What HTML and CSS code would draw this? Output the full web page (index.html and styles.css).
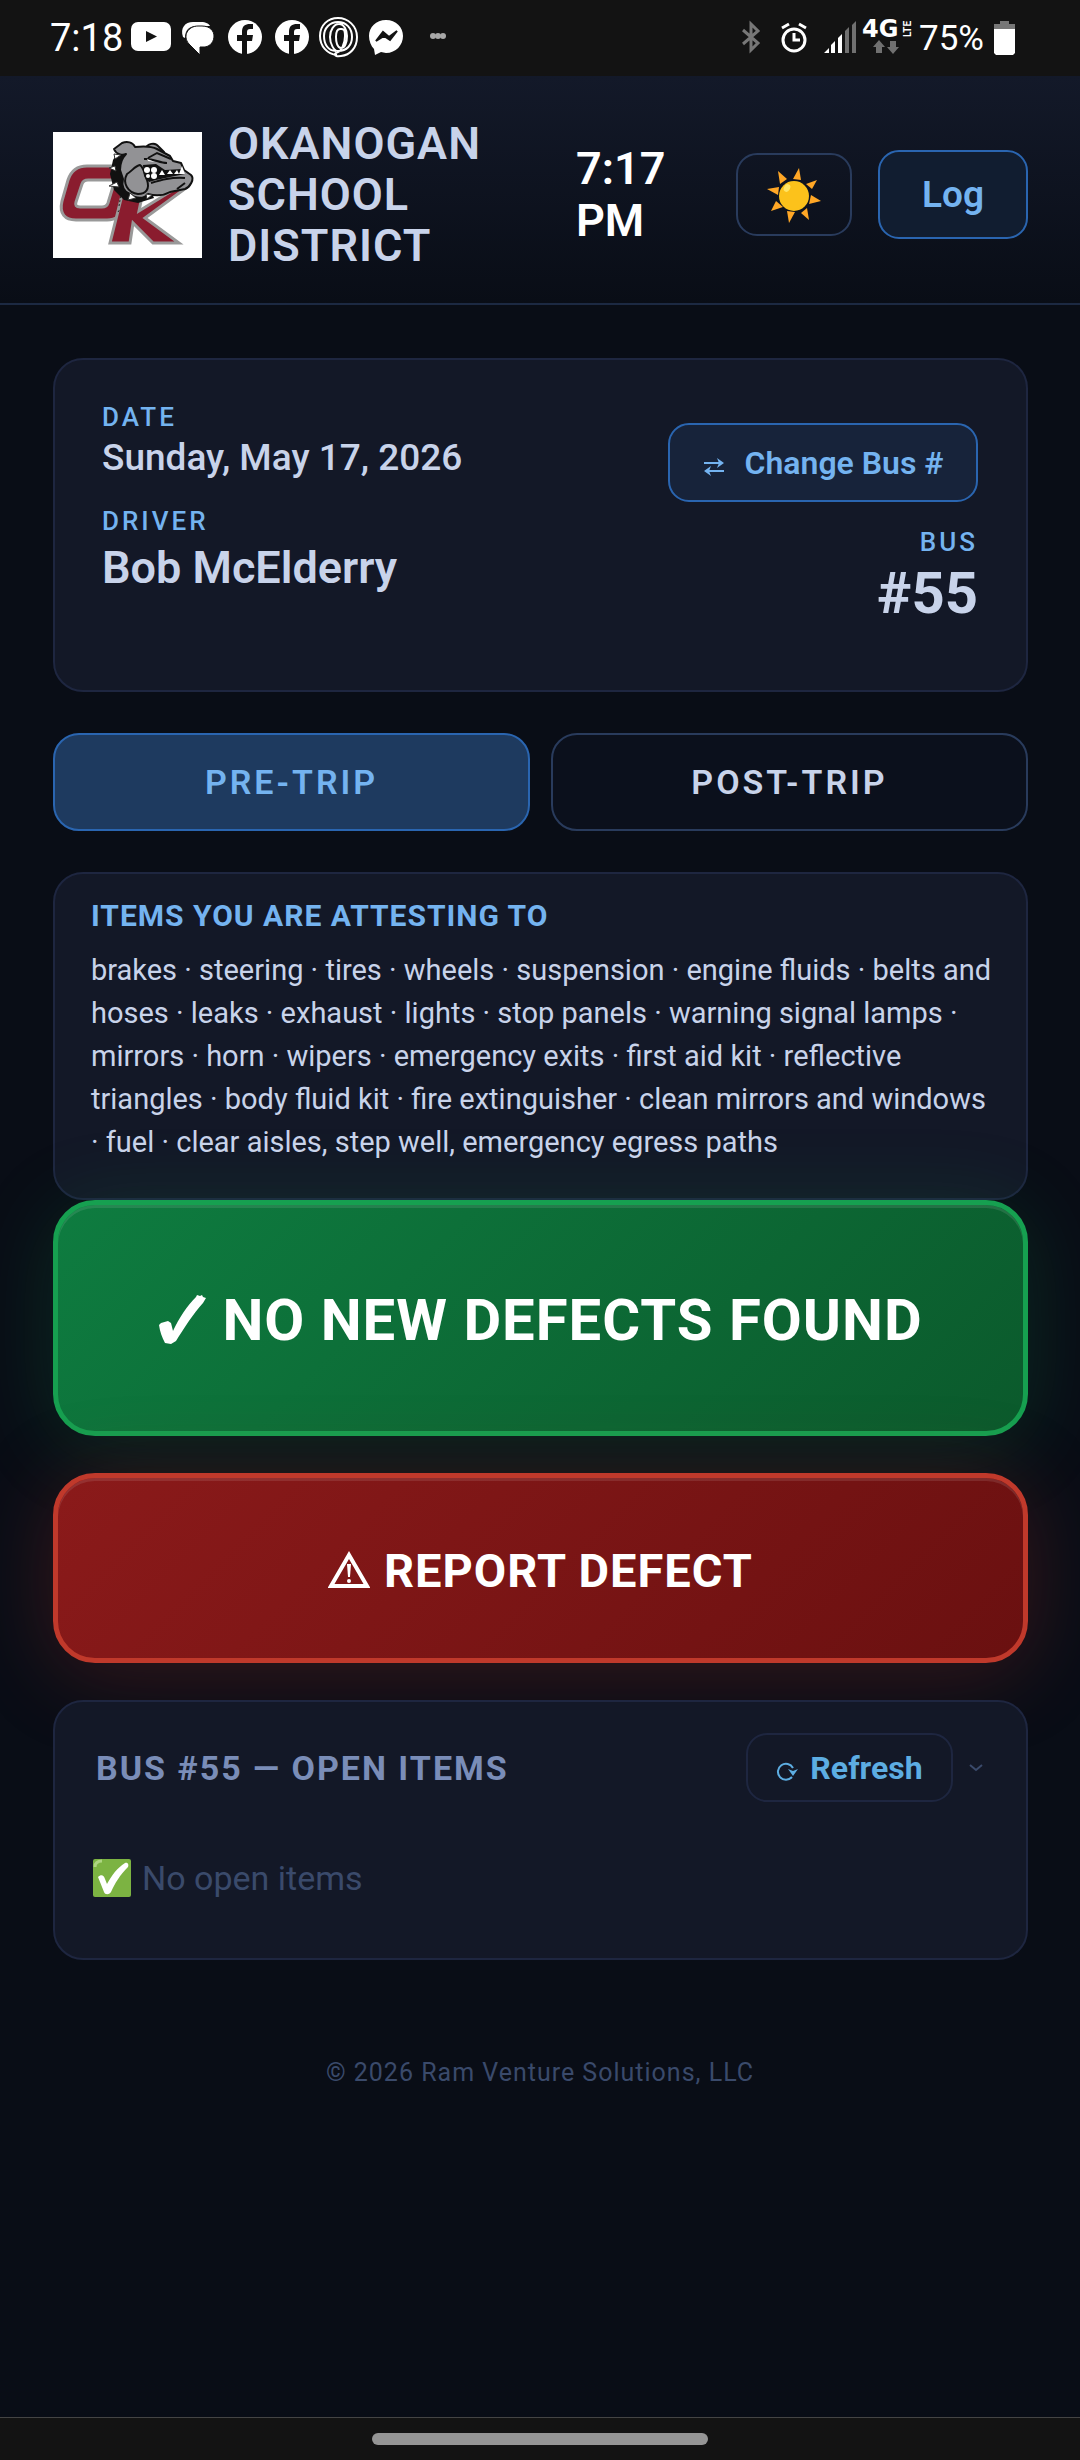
FILE: index.html
```html
<!DOCTYPE html>
<html lang="en">
  <head>
    <meta charset="UTF-8" />
    <meta name="viewport" content="width=device-width, initial-scale=1.0" />
    <title>Okanogan School District - Bus Inspection</title>
    <link rel="stylesheet" href="styles.css">
  </head>
  <body>
    <div class="status-bar">
      <div class="status-left">
        <span class="status-time">7:18</span>
        <svg width="320" height="42" viewBox="0 0 320 42" fill="#fff">
          <!-- youtube -->
          <rect x="0" y="5" width="40" height="29" rx="7" />
          <path d="M15 14v11l11-5.500z" fill="#131313" />
          <!-- chat -->
          <path d="M52 20c-3-9 2-15 10-15h8c5 0 8 2 9 4H66c-8 0-12 4-12 12z" />
          <path d="M67 9h4c8 0 12 5 12 10s-3 10-9 11h-5v8L58 27c-7-8-1-18 9-18z" stroke="#131313" stroke-width="1" />
          <!-- facebook -->
          <g id="fb">
            <circle cx="114" cy="20" r="17" />
            <path d="M111 37V24h-5v-6h5v-3c0-6 3-8 8-8h3v5h-3c-2 0-3 1-3 3v3h6l-1 6h-5v13z" fill="#131313" />
          </g>
          <use href="#fb" x="47" />
          <!-- rings -->
          <g fill="none" stroke="#fff" stroke-width="2">
            <path d="M206 38c-10-1-17-9-17-19 0-11 8-18 18-18s19 8 19 19-7 18-16 19-6-3-3-4 7-8 7-16-2-7-5-7-4 4-4 8 1 11 5 11 6-6 6-12-3-12-8-12-9 6-9 13 4 14 8 14c9 0 14-6 14-14 0-9-6-15-14-15s-14 6-14 14 4 15 12 15" />
          </g>
          <!-- messenger -->
          <path d="M255 3c10 0 17 7 17 16s-7 17-17 17l-5-1-6 3-1-6c-3-3-5-8-5-13 0-9 7-16 17-16z" />
          <path d="M245 24l7-9 6 5 8-6-7 9-6-4z" fill="#131313" stroke="#131313" stroke-width="2" />
          <g fill="#a8a8a8">
            <circle cx="302" cy="19" r="3" />
            <circle cx="307" cy="19" r="3" />
            <circle cx="312" cy="19" r="3" />
          </g>
        </svg>
      </div>
      <div class="status-right">
        <svg class="status-icons" width="172" height="40" viewBox="0 0 172 40">
          <!-- bluetooth -->
          <path d="M2 12l15 13-7 7V6l7 7L2 26" fill="none" stroke="#777" stroke-width="3" />
          <!-- alarm -->
          <g fill="none" stroke="#fff" stroke-width="3">
            <circle cx="53" cy="22" r="11" />
            <path d="M53 15v7h6M41 10l7-4M65 10l-7-4" />
          </g>
          <!-- signal -->
          <path d="M83 35l5-5v5zM90 35v-8l4-4v12zM97 35V20l4-4v19z" fill="#fff" />
          <path d="M104 35V13l4-4v26zM111 35V7l4-4v32z" fill="#707070" />
          <path d="M138 22l6 7h-3v6h-6v-6h-3zM152 36l6-7h-3v-6h-6v6h-3z" fill="#707070" />
          <text x="121" y="19" class="net-label">4G</text>
          <text x="-19" y="170" transform="rotate(-90)" class="lte-label">LTE</text>
        </svg>
        <span class="battery-text">75%</span>
        <svg width="22" height="34" viewBox="0 0 22 34">
          <path d="M6 0h9v3h6v6H0V3h6z" fill="#777" />
          <path d="M0 8h21v24l-2 2H2l-2-2z" fill="#fff" />
        </svg>
      </div>
    </div>

    <header class="header">
      <svg class="logo" viewBox="0 0 149 126" role="img" aria-label="Okanogan Bulldogs">
        <rect width="149" height="126" fill="#fff" />
        <g stroke="#999" stroke-width="3" fill="#8a1c2e">
          <path d="M59 34H34c-10 0-16 5-19 14L9 69c-3 13 3 19 14 19h31c9 0 15-5 18-14l9-30V34zM35 48h27l-7 23c-1 3-3 4-6 4H27c-4 0-5-2-4-5l6-18c1-3 3-4 6-4z" fill-rule="evenodd" />
          <path d="M71 55h20l-5 24 39-24 8 1-41 30 34 25h-26L80 91l-3 20H57z" />
        </g>
        <path d="M66 74l3-18M65 80l2-3" stroke="#222" stroke-width="1" stroke-dasharray="2 2" />
        <path d="M65 20l-5 8-3 14 4 16 10 10 14 3 16-5-20-44z" fill="#111" />
        <g fill="#929295" stroke="#111" stroke-width="2" stroke-linejoin="round">
          <path d="M92 17c2-5 10-8 14-2l5 5-14 2z" />
          <path d="M61 17l8-6c5-2 11-1 13 4 9-1 16-1 22 2l13 7 3 5 8 2 3 7 7 5c4 4-1 12-6 14l-15 3c-7 4-15 4-22 2-4 5-12 5-18 0-6-2-9-8-7-15l-3-9c0-7 2-12 6-16-4 2-10 0-12-5z" />
          <path d="M74 42c5-3 8-8 13-9 5 4 4 10 7 15 3 9-1 14-9 14-10-1-16-11-11-20z" />
        </g>
        <path d="M90 33l13-1 9 6 17-1 3 5-15 3-14 3-7 2-5-6z" fill="#111" />
        <g fill="#fff">
          <circle cx="94" cy="38" r="3" /><circle cx="101" cy="38" r="3" />
          <circle cx="95" cy="44" r="2" /><circle cx="101" cy="44" r="3" />
          <path d="M106 43l3-5 3 5zM114 42l3-4 3 4zM121 42l3-4 2 4zM126 42l3-8 3 8z" />
        </g>
        <path d="M91 27c9-1 15 4 23 4M95 26l9-5 14 6M98 51c10-3 20-6 34-5M124 57l8-6" fill="none" stroke="#111" stroke-width="2" />
        <path d="M94 27l8 3-7-1z" fill="#fff" />
        <path d="M61 22l7 1-6 4zM56 36l6-2 1 5zM56 54l8-4 2 5zM75 68l2-7 6 5zM94 67l-1-5 6 1z" fill="#fff" stroke="#333" stroke-width="1" />
      </svg>
      <h1 class="district">Okanogan School District</h1>
      <time class="clock">7:17 PM</time>
      <button class="btn theme-btn" type="button" aria-label="Light mode">
        <svg width="56" height="56" viewBox="0 0 56 56">
          <g fill="#ffa726">
            <path d="M33 1l2 12-8-1z" />
            <path d="M51 13l-5 9-6-5z" />
            <path d="M55 34l-12 3 2-9z" />
            <path d="M43 53l-8-7 6-5z" />
            <path d="M23 56l-2-12 8 1z" />
            <path d="M5 44l5-10 7 6z" />
            <path d="M1 22l12-2-1 8z" />
            <path d="M12 4l9 8-7 5z" />
          </g>
          <circle cx="28" cy="29" r="15" fill="#fcc21b" />
          <ellipse cx="21" cy="21" rx="3" ry="4" transform="rotate(30 21 21)" fill="#ffe567" />
        </svg>
      </button>
      <button class="btn log-btn" type="button">Log</button>
    </header>

    <main class="main">
      <section class="card info-card">
        <dl class="info">
          <dt>Date</dt>
          <dd class="date">Sunday, May 17, 2026</dd>
          <dt>Driver</dt>
          <dd class="driver">Bob McElderry</dd>
        </dl>
        <div class="bus-side">
          <button class="btn change-btn" type="button">
            <svg width="22" height="28" viewBox="0 0 22 28">
              <path d="M1 14h17M21 22H4" stroke="currentColor" stroke-width="2" />
              <path d="M14 9l7 5-7 5 2-5zM8 17l-7 5 7 5-2-5z" fill="currentColor" />
            </svg>
            Change Bus #
          </button>
          <dl class="info info-bus">
            <dt>Bus</dt>
            <dd class="bus-number">#55</dd>
          </dl>
        </div>
      </section>

      <div class="tabs">
        <button class="tab active" type="button">Pre-Trip</button>
        <button class="tab" type="button">Post-Trip</button>
      </div>

      <section class="card attest">
        <h2>Items you are attesting to</h2>
        <p>brakes · steering · tires · wheels · suspension · engine fluids · belts and hoses · leaks · exhaust · lights · stop panels · warning signal lamps · mirrors · horn · wipers · emergency exits · first aid kit · reflective triangles · body fluid kit · fire extinguisher · clean mirrors and windows · fuel · clear aisles, step well, emergency egress paths</p>
      </section>

      <button class="action ok" type="button">
        <svg width="50" height="52" viewBox="0 0 50 52" fill="#fff">
          <path d="M1 31l2-2 7-2 3 2 2 8C21 24 29 12 38 3l1-2 3 1 2-1 1 2 3 1-3 5C35 20 26 34 18 47l-5 3-6-1c-3-6-5-11-6-18z" />
        </svg>
        No new defects found
      </button>
      <button class="action defect" type="button">
        <svg width="42" height="38" viewBox="0 0 42 38">
          <path d="M21 4L3 35h36z" fill="none" stroke="#fff" stroke-width="4" />
          <path d="M19 13h4l-1 13h-2z" fill="#fff" />
          <circle cx="21" cy="30" r="2" fill="#fff" />
        </svg>
        Report defect
      </button>

      <section class="card open-items">
        <div class="open-head">
          <h2>Bus #55 — Open items</h2>
          <button class="btn refresh-btn" type="button">
            <svg width="22" height="26" viewBox="0 0 22 26">
              <path d="M16 22a8 8 0 1 1 1-9" fill="none" stroke="currentColor" stroke-width="2" />
              <path d="M12 14l5 2 5-2-5 7z" fill="currentColor" />
            </svg>
            Refresh
          </button>
          <svg class="chevron" width="14" height="8" viewBox="0 0 14 8" fill="none" stroke="currentColor" stroke-width="2">
            <path d="M1 1l6 5 6-5" />
          </svg>
        </div>
        <p class="empty">
          <svg width="40" height="40" viewBox="0 0 40 40">
            <rect x="1" y="1" width="38" height="38" rx="2" fill="#7cb342" />
            <path d="M3 9c0-4 2-6 7-6" fill="none" stroke="#aed581" stroke-width="3" />
            <path d="M6 19c3-3 6-2 7 2l2 5C20 17 25 10 33 5c3-1 4 2 3 4-8 8-13 16-17 25-2 3-6 3-7 0z" fill="#fff" />
          </svg>
          No open items
        </p>
      </section>
    </main>

    <footer class="footer">© 2026 Ram Venture Solutions, LLC</footer>
    <div class="nav-bar"><span class="nav-pill"></span></div>
  </body>
</html>
```
FILE: styles.css
```css
* {
  box-sizing: border-box;
}
body {
  margin: 0;
  min-height: 100vh;
  display: flex;
  flex-direction: column;
  background: #090d16;
  color: #c8d3ea;
  font-family: Roboto, sans-serif;
}
h1, h2, p, dl, dd {
  margin: 0;
}
svg {
  flex-shrink: 0;
}
button {
  font-family: inherit;
  cursor: pointer;
}

/* phone status bar */
.status-bar {
  display: flex;
  justify-content: space-between;
  align-items: center;
  height: 76px;
  padding: 0 64px 0 50px;
  background: #131313;
  color: #fff;
}
.status-left,
.status-right {
  display: flex;
  align-items: center;
}
.status-left {
  gap: 8px;
}
.status-time {
  font-size: 38px;
}
.status-right {
  gap: 6px;
}
.status-icons {
  overflow: visible;
}
.battery-text {
  margin-right: 4px;
  font-size: 35px;
}
.net-label {
  fill: #fff;
  font-family: "DejaVu Sans", sans-serif;
  font-size: 24px;
  font-weight: 700;
}
.lte-label {
  fill: #fff;
  font-size: 10px;
  font-weight: 700;
}

.header {
  display: flex;
  align-items: center;
  gap: 26px;
  padding: 42px 52px 32px 53px;
  background: linear-gradient(#131929, #090d16);
  border-bottom: 2px solid #1c2942;
}
.logo {
  width: 149px;
  height: 126px;
}
.district {
  flex: 1;
  max-width: 290px;
  margin-right: auto;
  font-size: 45px;
  line-height: 51px;
  font-weight: 600;
  letter-spacing: 1px;
  text-transform: uppercase;
}
.clock {
  width: 134px;
  color: #fff;
  font-size: 45px;
  line-height: 52px;
  font-weight: 600;
}
.btn {
  display: flex;
  align-items: center;
  justify-content: center;
  border: 2px solid #2a65b0;
  border-radius: 21px;
  background: none;
  color: #74b3f0;
  font-weight: 600;
}
.theme-btn {
  width: 116px;
  height: 83px;
  padding: 0;
  border-color: #293b5c;
}
.log-btn {
  width: 150px;
  height: 89px;
  background: #111d30;
  font-size: 37px;
}

.main {
  padding: 53px 52px 0 53px;
}
.card {
  border: 2px solid #1e2640;
  border-radius: 30px;
  background: #131827;
}
.info-card {
  display: flex;
  justify-content: space-between;
  height: 334px;
  padding: 41px 48px 41px 47px;
}
.info dt {
  color: #74b3f0;
  font-size: 26px;
  line-height: 32px;
  font-weight: 500;
  letter-spacing: 3px;
  text-transform: uppercase;
}
.info dd {
  font-weight: 600;
}
.info .date {
  margin-bottom: 22px;
  font-size: 37px;
  line-height: 50px;
  font-weight: 500;
}
.info .driver {
  font-size: 45px;
  line-height: 62px;
}
.bus-side {
  display: flex;
  flex-direction: column;
  align-items: flex-end;
  padding-top: 22px;
}
.change-btn {
  gap: 20px;
  width: 310px;
  height: 79px;
  margin-bottom: 24px;
  background: #17233a;
  font-size: 32px;
}
.info-bus {
  text-align: right;
}
.info .bus-number {
  font-size: 58px;
  line-height: 70px;
  font-weight: 700;
}

.tabs {
  display: grid;
  grid-template-columns: 1fr 1fr;
  gap: 21px;
  margin: 41px 0;
}
.tab {
  height: 98px;
  border: 2px solid #293b5c;
  border-radius: 26px;
  background: #0b101c;
  color: #c8d3ea;
  font-size: 34px;
  font-weight: 600;
  letter-spacing: 3px;
  text-transform: uppercase;
}
.tab.active {
  border-color: #2a65b0;
  background: #1e3a5f;
  color: #74b3f0;
}

.attest {
  padding: 25px 32px 34px 36px;
}
.attest h2 {
  margin-bottom: 16px;
  color: #74b3f0;
  font-size: 30px;
  line-height: 34px;
  font-weight: 700;
  letter-spacing: 1px;
  text-transform: uppercase;
}
.attest p {
  font-size: 29px;
  line-height: 43px;
}

.action {
  display: flex;
  align-items: center;
  justify-content: center;
  gap: 14px;
  width: 100%;
  margin-bottom: 37px;
  padding: 4px 0 0;
  border: 5px solid;
  border-radius: 42px;
  color: #fff;
  font-weight: 700;
  letter-spacing: 1px;
  text-transform: uppercase;
}
.ok {
  height: 236px;
  border-color: #16a050;
  background: linear-gradient(135deg, #0e7c40, #0b5a2c);
  box-shadow: 0 10px 84px rgba(22, 160, 80, 0.2), inset 0 3px 0 rgba(255, 255, 255, 0.1);
  font-size: 58px;
}
.defect {
  height: 190px;
  border-color: #c0392b;
  background: linear-gradient(135deg, #8b1a1a, #6a1010);
  box-shadow: 0 10px 84px rgba(192, 57, 43, 0.25), inset 0 3px 0 rgba(255, 255, 255, 0.1);
  font-size: 47px;
}

.open-items {
  padding: 31px 38px 57px 37px;
}
.open-head {
  display: flex;
  align-items: center;
  gap: 16px;
}
.open-head h2 {
  flex: 1;
  padding-left: 4px;
  color: #7a8db8;
  font-size: 34px;
  font-weight: 700;
  letter-spacing: 2px;
  text-transform: uppercase;
}
.refresh-btn {
  gap: 12px;
  width: 207px;
  height: 69px;
  border-color: #1e2640;
  color: #5dade2;
  font-size: 32px;
  font-weight: 700;
}
.chevron {
  margin-right: 5px;
  color: #3a4a6b;
}
.empty {
  display: flex;
  align-items: center;
  gap: 10px;
  margin-top: 53px;
  color: #3a4a6b;
  font-size: 34px;
  line-height: 46px;
}

.footer {
  padding: 98px 0;
  color: #3a4a6b;
  font-size: 25px;
  letter-spacing: 1px;
  text-align: center;
}
.nav-bar {
  display: flex;
  align-items: center;
  justify-content: center;
  height: 43px;
  margin-top: auto;
  border-top: 1px solid #444;
  background: #131313;
}
.nav-pill {
  width: 336px;
  height: 12px;
  border-radius: 6px;
  background: #959595;
}
```
